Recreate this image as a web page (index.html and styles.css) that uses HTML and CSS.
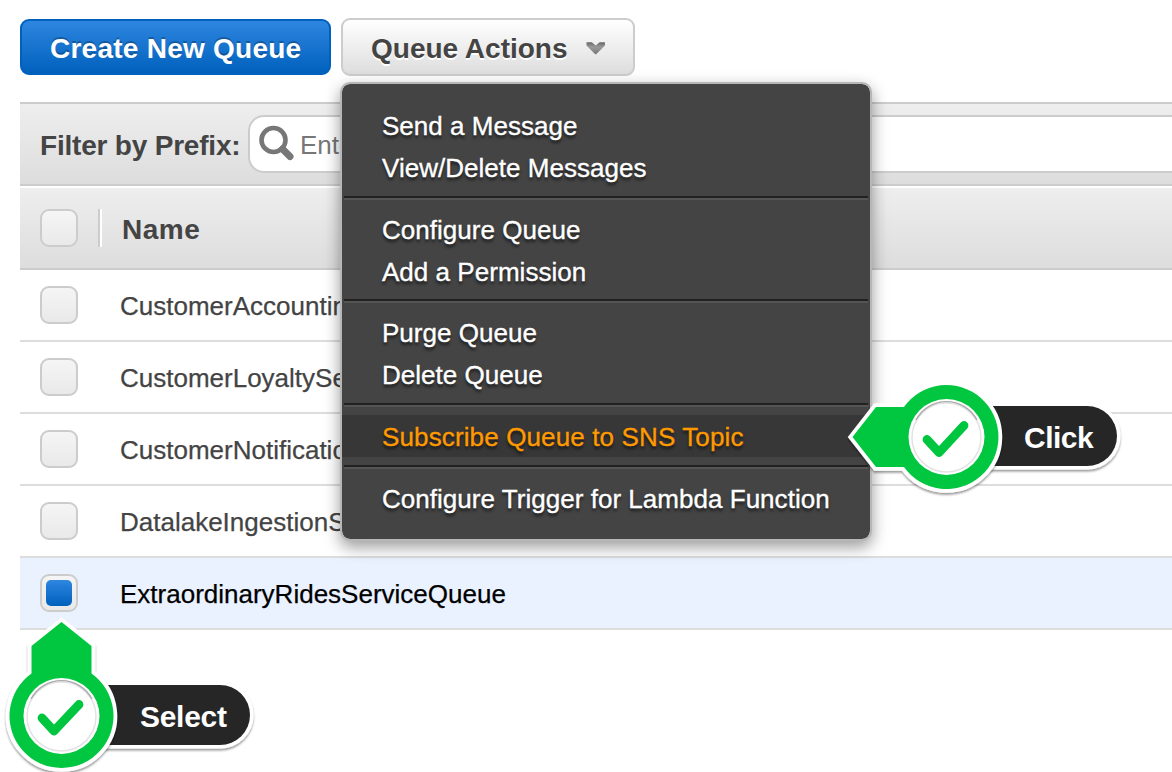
FILE: index.html
```html
<!DOCTYPE html>
<html lang="en">
<head>
<meta charset="utf-8">
<title>Queues</title>
<link rel="stylesheet" href="styles.css">
</head>
<body>
<svg class="defs" width="0" height="0" aria-hidden="true">
  <defs>
    <filter id="lift" x="-10%" y="-10%" width="120%" height="130%">
      <feDropShadow dx="0" dy="2" stdDeviation="1" flood-color="#000" flood-opacity=".4"/>
    </filter>
    <linearGradient id="chev" x1="0" y1="0" x2="0" y2="1">
      <stop offset="0" stop-color="#666"/><stop offset=".4" stop-color="#999"/><stop offset="1" stop-color="#777"/>
    </linearGradient>
  </defs>
</svg>
<main class="page">
  <div class="toolbar">
    <button class="btn btn-primary"><span class="create-label">Create New Queue</span></button>
    <button class="btn btn-default"><span class="actions-label">Queue Actions</span>
      <svg class="chevron" width="20" height="14" viewBox="0 0 20 14"><path d="M.5 1H6L10 4.500L14 1H19.500V4.500L10.500 13.500H9.500L.5 4.500Z" fill="url(#chev)"/></svg>
    </button>
  </div>
  <div class="filter">
    <span class="filter-label">Filter by Prefix:</span>
    <div class="search">
      <svg width="38" height="38" viewBox="0 0 38 38"><circle cx="14.500" cy="15" r="12" fill="none" stroke="#777" stroke-width="4.6"/><path d="M23.500 24L31 31.500" stroke="#777" stroke-width="7" stroke-linecap="round"/></svg>
      <span class="placeholder">Enter Text...</span>
    </div>
  </div>
  <div class="thead"><span class="check"></span><span class="divider"></span><span class="name-label">Name</span></div>
  <div class="row"><span class="check"></span><span class="queue">CustomerAccountingServiceQueue</span></div>
  <div class="row"><span class="check"></span><span class="queue">CustomerLoyaltyServiceQueue</span></div>
  <div class="row"><span class="check"></span><span class="queue">CustomerNotificationServiceQueue</span></div>
  <div class="row"><span class="check"></span><span class="queue">DatalakeIngestionServiceQueue</span></div>
  <div class="row selected"><span class="check checked"></span><span class="queue">ExtraordinaryRidesServiceQueue</span></div>
</main>
<nav class="menu">
  <div class="group"><a>Send a Message</a><a>View/Delete Messages</a></div>
  <div class="group"><a>Configure Queue</a><a>Add a Permission</a></div>
  <div class="group"><a>Purge Queue</a><a>Delete Queue</a></div>
  <div class="group single"><a class="active">Subscribe Queue to SNS Topic</a></div>
  <div class="group"><a>Configure Trigger for Lambda Function</a></div>
</nav>
<div class="marker marker-click">
  <svg width="290" height="130" viewBox="840 375 290 130">
    <g filter="url(#lift)"><path d="M946 406H1087A30 30 0 0 1 1087 466H946Z" fill="#252525" stroke="#fff" stroke-width="7" paint-order="stroke"/></g>
    <g filter="url(#lift)" fill="#00c63f" stroke="#fff" stroke-width="7.500" paint-order="stroke"><path d="M852.5 437L876 407H904A52 52 0 1 1 904 467H876Z"/></g>
    <circle cx="946.500" cy="437" r="38" fill="#fff"/>
    <circle cx="946.500" cy="437.500" r="34.500" fill="none" stroke="#e3e3e3" stroke-width="1.500"/>
    <path d="M916 420A34.500 34.500 0 0 1 977 420" fill="none" stroke="#aaa" stroke-width="1.300"/>
    <path d="M927 439.500L939 452.500L964 425.500" fill="none" stroke="#00c63f" stroke-width="8.800" stroke-linecap="round" stroke-linejoin="round"/>
  </svg>
  <span class="click-label">Click</span>
</div>
<div class="marker marker-select">
  <svg width="260" height="162" viewBox="0 610 260 162">
    <g filter="url(#lift)"><path d="M62 685H220A30 30 0 0 1 220 745H62Z" fill="#252525" stroke="#fff" stroke-width="7" paint-order="stroke"/></g>
    <g filter="url(#lift)" fill="#00c63f" stroke="#fff" stroke-width="7.500" paint-order="stroke"><path d="M61.500 622L91.500 646V673.500A52 52 0 1 1 31.500 673.500V646Z"/></g>
    <circle cx="61.500" cy="716" r="38" fill="#fff"/>
    <circle cx="61.500" cy="716.500" r="34.500" fill="none" stroke="#e3e3e3" stroke-width="1.500"/>
    <path d="M31 699A34.500 34.500 0 0 1 92 699" fill="none" stroke="#aaa" stroke-width="1.300"/>
    <path d="M42 718L54 731L79 704.500" fill="none" stroke="#00c63f" stroke-width="8.800" stroke-linecap="round" stroke-linejoin="round"/>
  </svg>
  <span class="select-label">Select</span>
</div>
</body>
</html>
```
FILE: styles.css
```css
*, *::before { box-sizing: border-box; }
body { margin: 0; width: 1172px; height: 772px; overflow: hidden; position: relative; background: #fff; color: #444; font-family: "Liberation Sans", Arial, sans-serif; font-size: 26px; }
.defs { position: absolute; }
.page { padding: 18px 0 0 20px; }
.toolbar { display: flex; align-items: center; gap: 10px; height: 58px; margin-bottom: 26px; }
.btn { display: flex; align-items: center; font: bold 28px "Liberation Sans", Arial, sans-serif; border-radius: 9px; padding: 0 28px; white-space: nowrap; }
.btn-primary { width: 311px; height: 56px; color: #fff; border: 2px solid #0061bd; background: linear-gradient(#2e86e0, #0061bd); text-shadow: 0 -2px 0 rgba(0, 0, 0, .25); }
.btn-default { width: 294px; height: 58px; color: #444; border: 2px solid #ccc; background: linear-gradient(#fff, #ddd); text-shadow: 0 2px 0 #fff; }
.create-label { padding-top: 3px; letter-spacing: .25px; }
.actions-label { padding-top: 3px; }
.chevron { margin: 2px 0 0 18px; }
.filter { display: flex; align-items: center; height: 84px; padding-left: 20px; border: solid #ccc; border-width: 2px 0; background: linear-gradient(#eee, #ddd); }
.filter-label { width: 208px; padding-top: 4px; font-size: 28px; letter-spacing: -.2px; font-weight: bold; white-space: nowrap; }
.search { display: flex; align-items: center; flex: 1; height: 58px; padding-left: 9px; border: 2px solid #ccc; border-right: 0; border-radius: 16px 0 0 16px; background: #fff; }
.placeholder { width: 42px; margin-left: 3px; padding-top: 2px; overflow: hidden; color: #777; white-space: nowrap; }
.thead { display: flex; align-items: center; height: 84px; padding-left: 20px; border-top: 2px solid #fff; border-bottom: 2px solid #ccc; background: linear-gradient(#eee, #ddd) padding-box; font-weight: bold; }
.name-label { padding-top: 4px; font-size: 28px; letter-spacing: .5px; }
.check { flex: none; width: 38px; height: 38px; border: 2px solid #ccc; border-radius: 9px; background: linear-gradient(#f5f5f5, #e9e9e9); }
.divider { width: 4px; height: 38px; margin: 0 20px; border-left: 2px solid #ccc; background: #fff; }
.row { display: flex; align-items: center; height: 72px; padding-left: 20px; border-bottom: 2px solid #ddd; }
.queue { width: 222px; margin-left: 42px; padding-top: 3px; overflow: hidden; white-space: nowrap; -webkit-text-stroke: .25px; }
.selected { color: #000; background: #eaf2ff; }
.selected .queue { width: auto; }
.checked { padding: 4px; }
.checked::before { content: ""; display: block; width: 26px; height: 26px; border-radius: 5px; background: linear-gradient(#2e86e0, #0061bd); }
.menu { position: absolute; left: 340px; top: 82px; width: 532px; height: 459px; padding: 12px 0 0; border: 2px solid #b7b7b7; border-radius: 10px; background: #444 padding-box; box-shadow: 0 6px 16px rgba(0, 0, 0, .4); color: #fff; text-shadow: 0 3px 3px rgba(0, 0, 0, .6); }
.group { position: relative; padding: 8px 0 7.75px; }
.group + .group { padding-top: 11.75px; }
.group.single { padding-bottom: 8.5px; }
.group + .group::before { content: ""; display: block; position: absolute; left: 2px; right: 2px; top: 0; height: 4px; border-top: 2px solid #222; border-bottom: 2px solid #555; }
.group a { display: block; height: 42px; padding: 1px 0 0 40px; line-height: 42px; white-space: nowrap; letter-spacing: .03px; -webkit-text-stroke: .35px; }
.group .active { color: #f90; background: #373737; letter-spacing: .13px; }
.marker { position: absolute; color: #fff; font-weight: bold; font-size: 30px; }
.marker svg { display: block; }
.marker span { position: absolute; line-height: 34px; letter-spacing: -.5px; }
.marker-click { left: 840px; top: 375px; }
.marker-select { left: 0; top: 610px; }
.click-label { left: 184px; top: 46px; }
.marker .select-label { left: 140px; top: 90px; letter-spacing: -.3px; }
```
